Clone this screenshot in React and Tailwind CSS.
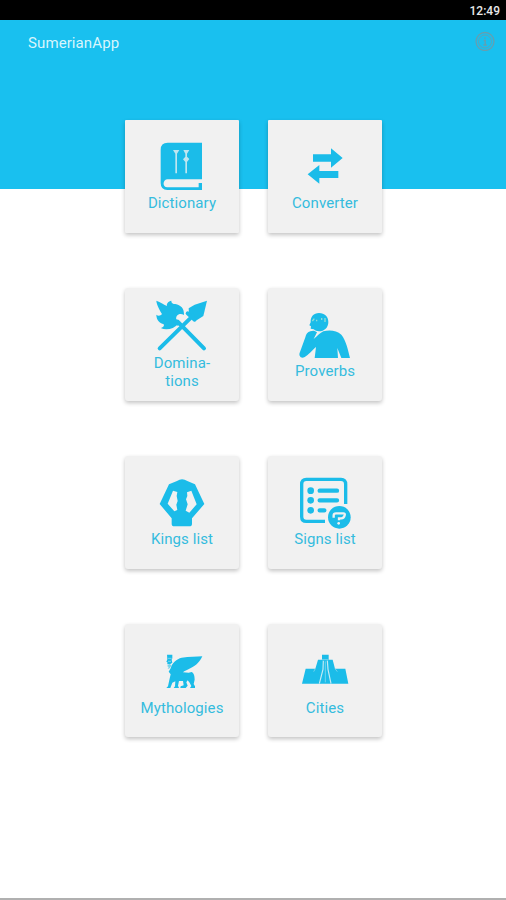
import clsx from "clsx";

const DictionaryIcon = () => (
  <svg viewBox="30 30 342 219" className="h-[73px] w-[114px] fill-[#1bbce9]">
    <path fillRule="evenodd" d="M158 98H261V208H158C143 208 141 232 157 232H251V219H261V240H157Q137 239 137 219V119Q137 98 158 98Z" />
    <g className="fill-[#bfe6f0]">
      <path d="M174 120H193L186 131V190H181V131ZM205 120H223L216 131V140L223 147L216 156V190H211V156L204 148L211 140V131Z" />
    </g>
  </svg>
);

const ConverterIcon = () => (
  <svg viewBox="30 30 342 219" className="h-[73px] w-[114px] fill-[#1bbce9]">
    <path d="M165 133H219V115L254 144L219 173V155H165Z" />
    <path d="M241 183H184V165L149 193L184 221V204H241Z" />
  </svg>
);

const DominationsIcon = () => (
  <svg viewBox="30 30 342 195" className="h-[65px] w-[114px] fill-[#1bbce9]">
    <path d="M124 68C136 72 148 80 156 84C154 76 160 70 169 68C168 75 174 78 181 78C197 81 208 91 207 111C200 106 190 107 186 113C181 119 184 130 191 137C176 152 155 159 137 150C146 148 149 142 145 138C137 136 124 128 124 110C128 114 136 115 141 108C135 98 125 81 124 68Z" />
    <path d="M276 68L265 114L245 127L222 111L221 91L239 80Z" />
    <path
      d="M188 131L267 211M234 113L134 211M176 124L189 137M218 106L239 125"
      fill="none"
      stroke="#1bbce9"
      strokeWidth="12"
      strokeLinecap="round"
    />
  </svg>
);

const ProverbsIcon = () => (
  <svg viewBox="30 30 342 219" className="h-[73px] w-[114px] fill-[#1bbce9]">
    <path d="M183 105C200 105 211 116 211 132C211 149 199 160 183 160C176 160 171 158 167 154L158 152L159 145L154 142L158 133C157 116 167 105 183 105Z" />
    <path d="M157 160C165 157 171 158 177 163L167 183C178 174 186 165 196 160C214 155 236 157 250 170C264 187 271 218 276 240H250L238 210L240 240H170L174 207C160 219 147 237 134 239C125 239 122 230 126 222L142 178C144 168 149 162 157 160Z" />
    <path
      d="M163 129L169 122M176 125V130M191 120V126M201 120V132"
      fill="none"
      stroke="#8fddd6"
      strokeWidth="4"
    />
  </svg>
);

const KingsIcon = () => (
  <svg viewBox="30 30 342 219" className="h-[73px] w-[114px] fill-[#1bbce9]">
    <path
      fillRule="evenodd"
      d="M186 105Q201 94 217 105L240 115L268 174L231 217V233Q231 241 223 241H178Q170 241 170 233V217L134 174L162 115ZM174 134L158 173L178 196L187 192L184 176L188 165L185 150L187 138ZM229 134L216 139L217 150L213 160L218 175L212 194L223 200L245 175Z"
    />
  </svg>
);

const SignsIcon = () => (
  <svg viewBox="30 30 342 219" className="h-[73px] w-[114px] fill-[#1bbce9]">
    <path
      d="M201 226H145Q131 226 131 212V115Q131 100 145 100H249Q263 100 263 115V174"
      fill="none"
      stroke="#1bbce9"
      strokeWidth="10"
    />
    <circle cx="158" cy="134" r="10" />
    <circle cx="158" cy="163" r="10" />
    <circle cx="158" cy="193" r="10" />
    <path
      d="M185 134H237M185 163H237M185 193H199"
      fill="none"
      stroke="#1bbce9"
      strokeWidth="13"
      strokeLinecap="round"
    />
    <circle cx="244" cy="214" r="34" />
    <path
      d="M227 215V208Q227 202 234 202H256Q262 202 260 208Q258 217 250 217H243V223"
      fill="none"
      stroke="#f1f1f1"
      strokeWidth="7"
    />
    <circle cx="242" cy="232" r="4" className="fill-[#f1f1f1]" />
  </svg>
);

const MythologiesIcon = () => (
  <svg viewBox="30 30 342 219" className="h-[73px] w-[114px] fill-[#1bbce9]">
    <g transform="translate(105 78)">
      <path d="M51 44H67V55L65 59L67 68L60 73H52V66H49L52 58Z" />
      <path d="M56 95L62 85C66 68 80 57 95 53C118 49 140 51 157 49C149 65 141 76 121 85C111 91 103 93 99 97L116 98L125 96C132 99 134 109 134 119L131 132L135 139V144H120L124 138L119 128L113 121L109 127L113 137L107 144H91L92 139L101 136L99 123H87L84 137L87 144H71L75 139L76 124L67 128L61 144H49L54 139L58 120L62 103Z" />
      <path d="M58 72L65 76L59 85L53 87L56 81L51 78Z" className="fill-[#75d3eb]" />
      <path d="M54 55H65M54 64H63" fill="none" stroke="#a9e1f0" strokeWidth="2" />
    </g>
  </svg>
);

const CitiesIcon = () => (
  <svg viewBox="30 30 342 219" className="h-[73px] w-[114px] fill-[#1bbce9]">
    <path d="M192 122H212V137H224L231 164H262L271 209H132L143 164H172L180 137H192Z" />
    <path
      d="M196 140L195 166L184 209M208 140L210 166L219 209"
      fill="none"
      stroke="#c5eaf3"
      strokeWidth="3.5"
    />
    <path
      d="M172 164L167 173M231 164L238 173M192 137H212M202 142V205"
      fill="none"
      stroke="#6fd2ed"
      strokeWidth="3"
    />
  </svg>
);

const tiles = [
  { icon: DictionaryIcon, label: ["Dictionary"], square: true },
  { icon: ConverterIcon, label: ["Converter"], square: true },
  { icon: DominationsIcon, label: ["Domina-", "tions"] },
  { icon: ProverbsIcon, label: ["Proverbs"] },
  { icon: KingsIcon, label: ["Kings list"] },
  { icon: SignsIcon, label: ["Signs list"] },
  { icon: MythologiesIcon, label: ["Mythologies"], low: true },
  { icon: CitiesIcon, label: ["Cities"], low: true },
];

const Tile = ({ icon: Icon, label, square, low }) => (
  <button
    className={clsx(
      "flex h-[113px] w-[114px] flex-col items-center bg-[#f1f1f1] shadow-[0_2px_4px_rgba(0,0,0,0.24)]",
      square ? "rounded-[1px]" : "rounded-[3px]"
    )}
  >
    <Icon />
    <span className={clsx("text-[15px] leading-[17.5px] tracking-[0.1px] text-[#35bcde]", low ? "pt-[3px]" : "pt-[2px]")}>
      {label.map((line) => (
        <span key={line} className="block">
          {line}
        </span>
      ))}
    </span>
  </button>
);

export default function App() {
  return (
    <div className="flex h-[900px] w-[506px] flex-col overflow-hidden border-b-2 border-[#b0b0b0] bg-white font-['Roboto',sans-serif]">
      {/* Status bar */}
      <div className="flex h-5 shrink-0 items-center justify-end bg-black pr-[6px] pt-[2px] text-[12px] font-medium text-[#e8e8e8]">
        12:49
      </div>

      {/* App bar */}
      <header className="flex h-[169px] shrink-0 items-start justify-between bg-[#19c0ef] pl-7 pr-[11px] pt-[11px]">
        <h1 className="pt-[1px] text-[15px] leading-[22px] tracking-[0.1px] text-[#d8f5fc]">SumerianApp</h1>
        <svg viewBox="0 0 20 20" className="h-5 w-5" fill="none" stroke="#669eb0">
          <circle cx="10" cy="10.5" r="9" strokeWidth="1.3" />
          <circle cx="10" cy="10.5" r="6.5" strokeWidth="0.9" />
          <path d="M10 6.5V8M8.7 9.5H10.2V14M8.5 14H11.8" strokeWidth="1.3" />
        </svg>
      </header>

      {/* Menu overlaps the lower part of the app bar */}
      <main className="-mt-[69px] grid grid-cols-[114px_114px] gap-x-[29px] gap-y-[55px] pl-[125px]">
        {tiles.map((tile) => (
          <Tile key={tile.label[0]} {...tile} />
        ))}
      </main>
    </div>
  );
}
